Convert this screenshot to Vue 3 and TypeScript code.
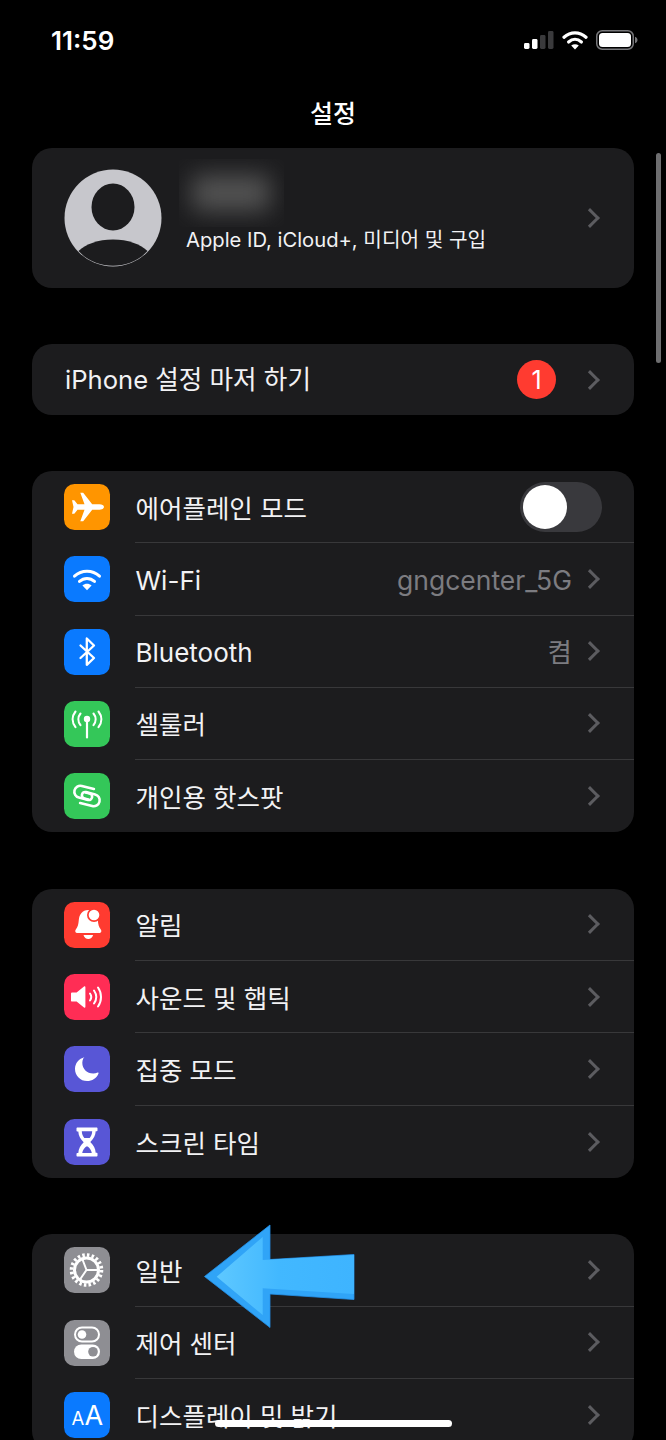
<script setup lang="ts">
interface Row { label: string; icon: string; bg: string; value?: string; toggle?: boolean }

const w = 'fill="#fff"'
const s = (width: number) => `fill="none" stroke="#fff" stroke-width="${width}" stroke-linecap="round" stroke-linejoin="round"`
const isLatin = (text: string) => /^[\x00-\x7f]+$/.test(text)

const icons: Record<string, string> = {
  plane: `<path ${w} d="M40 23c0-1.600-2.200-2.700-4.400-2.700h-7.400L19.600 9.200c-.3-.4-.6-.5-1-.5h-2.300l4.200 11.600h-7l-3-3.700c-.2-.3-.4-.4-.8-.4H8l1.500 6.800L8 29.800h1.700c.4 0 .6-.1.8-.4l3-3.700h7l-4.200 11.600h2.300c.4 0 .7-.1 1-.5l8.600-11.100h7.400c2.200 0 4.400-1.100 4.400-2.700z"/>`,
  wifi: `<path ${s(3)} d="M10.500 20.200c7.200-6.600 17.800-6.600 25 0"/><path ${s(3)} d="M15.500 25.400c4.400-4 10.600-4 15 0"/><path ${w} d="M23 34.200l-4.600-4.700c2.800-2.200 6.400-2.200 9.200 0z"/>`,
  bt: `<path ${s(2.3)} d="M16.500 16.500L30 29l-7.200 6.800V9.500L30 16.500 16.500 29"/>`,
  cell: `<circle cx="23" cy="18" r="3.200" fill="#fff"/><path ${s(2.2)} d="M23 19v17.500"/><path ${s(2.1)} d="M16.500 12.500c-2.800 3.400-2.800 8 0 11.600M29.500 12.500c2.800 3.400 2.800 8 0 11.600"/><path ${s(2.1)} d="M11.500 10.500c-3.800 4.800-3.800 10.800 0 15.600M34.500 10.500c3.800 4.800 3.800 10.800 0 15.600"/>`,
  link: `<g transform="rotate(14 23 23)"><path ${s(2.6)} d="M28 14.500H15.500a6 6 0 0 0 0 12H25a3.200 3.200 0 0 0 0-6.500h-4"/><path ${s(2.6)} d="M18 31.500h12.500a6 6 0 0 0 0-12H21a3.200 3.200 0 0 0 0 6.500h4"/></g>`,
  bell: `<path ${w} d="M24.300 8c-6 0-9 4.500-9.500 10-.4 4.600-1 7-3 9.500-1 1.200-.6 3.500 1 3.500h23c1.600 0 2-2.300 1-3.500-2-2.500-2.600-5-3-9.500-.5-5.500-3.500-10-9.500-10z"/><circle cx="30" cy="13" r="7" fill="#ff3b30"/><circle cx="30" cy="13" r="5.300" fill="#fff"/><path ${w} d="M19.500 33h9.600c-.8 2.800-2.500 4-4.800 4s-4-1.200-4.800-4z"/>`,
  sound: `<path ${w} d="M8 18.600h4.600L20 12.600c.8-.6 1.400-.2 1.400.7v19.400c0 .9-.6 1.300-1.400.7l-7.400-6h-4.600c-.7 0-1-.4-1-1v-7c0-.5.3-.8 1-.8z"/><path ${s(2)} d="M26 19.500c1.600 2.200 1.600 4.800 0 7"/><path ${s(2)} d="M30 16.500c2.800 4 2.800 9 0 13"/><path ${s(2)} d="M34 13.500c4 5.600 4 13.400 0 19"/>`,
  moon: `<path ${w} d="M20.600 11.200c-5.800 1.400-9.600 6-9.600 11.700 0 6.700 5.400 12.100 12.100 12.100 5 0 9.600-3 11.400-7.600.2-.6-.3-1-.8-.8-1.500.6-3 .9-4.500.9-6.300 0-10.900-4.700-10.900-10.800 0-1.500.4-3 1.100-4.500.3-.5-.2-1.100-.8-1z"/>`,
  hour: `<path ${w} d="M13.500 8.500h19c.6 0 1 .4 1 1v1.700c0 .6-.4 1-1 1h-.8c-.2 4.300-2.100 7.600-5.400 10.800 3.300 3.200 5.200 6.500 5.400 10.800h.8c.6 0 1 .4 1 1v1.700c0 .6-.4 1-1 1h-19c-.6 0-1-.4-1-1V35c0-.6.4-1 1-1h.8c.2-4.300 2.100-7.600 5.400-10.800-3.300-3.200-5.200-6.500-5.400-10.800h-.8c-.6 0-1-.4-1-1V9.500c0-.6.400-1 1-1z"/><path fill="#5856d6" d="M17.800 12.200h10.400c-.1 2.600-1 5-2.500 6.800h-5.400c-1.500-1.800-2.400-4.200-2.500-6.800zM22.200 27.500h1.600c1.800 1.700 3.500 3.400 4 6.500H18.200c.5-3.100 2.200-4.800 4-6.500z"/>`,
  gear: `<circle cx="22.500" cy="23" r="15" fill="none" stroke="#fff" stroke-width="3.600" stroke-dasharray="2.500 2.212"/><circle cx="22.500" cy="23" r="12" fill="none" stroke="#fff" stroke-width="3"/><path ${s(2)} d="M22.500 23L18.500 12.500M22.500 23H34M22.500 23l-6.500 9.500"/>`,
  ctrl: `<rect x="11" y="7.500" width="24" height="14" rx="7" fill="none" stroke="#fff" stroke-width="2"/><circle cx="18" cy="14.500" r="4.300" fill="#fff"/><rect x="10" y="24.500" width="26" height="14.500" rx="7.250" fill="#fff"/><circle cx="29" cy="31.750" r="4.800" fill="#8e8e93"/>`,
  aa: `<text x="7.500" y="33" font-family="Inter, sans-serif" font-size="18.500" fill="#fff">A</text><text x="20.500" y="33" font-family="Inter, sans-serif" font-size="27" fill="#fff">A</text>`,
}

const groups: Row[][] = [
  [
    { label: '에어플레인 모드', icon: 'plane', bg: '#ff9500', toggle: true },
    { label: 'Wi-Fi', icon: 'wifi', bg: '#0a7aff', value: 'gngcenter_5G' },
    { label: 'Bluetooth', icon: 'bt', bg: '#0a7aff', value: '켬' },
    { label: '셀룰러', icon: 'cell', bg: '#34c759' },
    { label: '개인용 핫스팟', icon: 'link', bg: '#34c759' },
  ],
  [
    { label: '알림', icon: 'bell', bg: '#ff3b30' },
    { label: '사운드 및 햅틱', icon: 'sound', bg: '#ff2d55' },
    { label: '집중 모드', icon: 'moon', bg: '#5856d6' },
    { label: '스크린 타임', icon: 'hour', bg: '#5856d6' },
  ],
  [
    { label: '일반', icon: 'gear', bg: '#8e8e93' },
    { label: '제어 센터', icon: 'ctrl', bg: '#8e8e93' },
    { label: '디스플레이 및 밝기', icon: 'aa', bg: '#0a7aff' },
  ],
]
</script>

<template>
  <div class="screen">
    <header class="status">
      <span class="time">11:59</span>
      <div class="status-icons">
        <svg width="30" height="18" viewBox="0 0 30 18">
          <rect x="0" y="12" width="5.500" height="6" rx="1.400" fill="#fff" />
          <rect x="8" y="8" width="5.500" height="10" rx="1.400" fill="#fff" />
          <rect x="16" y="4" width="5.500" height="14" rx="1.400" fill="#3a3a3c" />
          <rect x="24" y="0" width="5.500" height="18" rx="1.400" fill="#3a3a3c" />
        </svg>
        <svg width="26" height="20" viewBox="0 0 26 20">
          <path d="M2 7.200c6.500-5.800 15.500-5.800 22 0" fill="none" stroke="#fff" stroke-width="3.200" stroke-linecap="round" />
          <path d="M6.600 12c3.900-3.400 8.900-3.400 12.800 0" fill="none" stroke="#fff" stroke-width="3.200" stroke-linecap="round" />
          <path d="M13 19.500l-3.800-3.900c2.300-1.700 5.300-1.700 7.600 0z" fill="#fff" />
        </svg>
        <svg width="42" height="20" viewBox="0 0 42 20">
          <rect x="0.750" y="0.750" width="36.500" height="18.500" rx="5.500" fill="none" stroke="#77777a" stroke-width="1.500" />
          <rect x="3" y="3" width="32" height="14" rx="3.500" fill="#fff" />
          <path d="M39 6.800c1.500.4 2.500 1.700 2.500 3.200s-1 2.800-2.500 3.200z" fill="#77777a" />
        </svg>
      </div>
    </header>

    <h1 class="title">설정</h1>

    <section class="card profile">
      <svg class="avatar" width="98" height="98" viewBox="0 0 98 98">
        <circle cx="49" cy="49" r="48.500" fill="#c7c7cc" />
        <ellipse cx="49" cy="38" rx="21.500" ry="23.500" fill="#1c1c1e" />
        <path d="M14.500 82C22 75 34 70.500 49 70.500S76 75 83.500 82C75 91.500 62.500 96.800 49 96.800S23 91.500 14.500 82z" fill="#1c1c1e" />
      </svg>
      <div class="profile-text">
        <div class="blur-wrap"><div class="blur" /></div>
        <div class="sub">Apple ID, iCloud+, 미디어 및 구입</div>
      </div>
      <span class="chev" />
    </section>

    <section class="card single">
      <span class="label solo">iPhone 설정 마저 하기</span>
      <span class="badge">1</span>
      <span class="chev" />
    </section>

    <section v-for="(group, g) in groups" :key="g" class="card group">
      <div v-for="row in group" :key="row.label" class="row">
        <svg class="icon" :style="{ background: row.bg }" viewBox="0 0 46 46" width="46" height="46" v-html="icons[row.icon]" />
        <div class="row-main">
          <span class="label" :class="{ latin: isLatin(row.label) }">{{ row.label }}</span>
          <span v-if="row.value" class="value">{{ row.value }}</span>
          <span v-if="row.toggle" class="toggle"><span class="knob" /></span>
          <span v-else class="chev" />
        </div>
      </div>
    </section>

    <div class="scrollbar" />
    <svg class="arrow" width="152" height="106" viewBox="0 0 152 106">
      <defs>
        <linearGradient id="arrowFill" x1="0" y1="0" x2="1" y2="0">
          <stop offset="0" stop-color="#5ec8ff" />
          <stop offset="0.45" stop-color="#42b8ff" />
          <stop offset="1" stop-color="#3eb4ff" />
        </linearGradient>
      </defs>
      <path d="M.5 52.500L66 1V35.500L150 30.500V75.500L66 70V103.500z" fill="#30a4f7" stroke="#2390ea" stroke-width=".8" />
      <path d="M12.700 52.700L58.700 13V36L150 31V70L58.700 64.300V91z" fill="url(#arrowFill)" />
    </svg>
    <div class="home" />
  </div>
</template>

<style>
html, body { margin: 0; background: #000; }
</style>

<style scoped>
.screen {
  position: relative;
  width: 666px;
  height: 1440px;
  overflow: hidden;
  background: #000;
  color: #f2f2f4;
  font-family: Inter, "Noto Sans CJK KR", sans-serif;
  padding: 0 32px;
  box-sizing: border-box;
}
.status {
  display: flex;
  justify-content: space-between;
  align-items: center;
  height: 80px;
  margin: 0 -4px 0 19px;
}
.time { color: #fff; font-size: 26px; font-weight: 600; }
.status-icons { display: flex; align-items: center; gap: 8px; }
.title {
  margin: 0;
  height: 68px;
  line-height: 68px;
  text-align: center;
  font-size: 25px;
  font-weight: 500;
  color: #fff;
}
.card {
  background: #1c1c1e;
  border-radius: 20px;
  margin-bottom: 56px;
  overflow: hidden;
}
.profile {
  height: 140px;
  display: flex;
  align-items: center;
  padding: 0 34px 0 32px;
  box-sizing: border-box;
}
.avatar { flex: none; }
.profile-text { flex: 1; align-self: flex-start; margin-left: 24px; padding-top: 11px; }
.blur-wrap { height: 68px; margin-left: -7px; width: 105px; overflow: hidden; }
.blur {
  width: 78px;
  height: 36px;
  margin: 16px 0 0 13px;
  background: #545454;
  filter: blur(12px);
}
.sub { font-size: 20.200px; line-height: 26px; color: #f2f2f4; }
.single {
  height: 71px;
  display: flex;
  align-items: center;
  padding: 0 34px 0 32px;
}
.label.solo { flex: 1; padding: 0 0 0 1px; font-size: 25.600px; }
.badge {
  width: 39px;
  height: 39px;
  border-radius: 50%;
  background: #ff3b30;
  color: #fff;
  display: flex;
  align-items: center;
  justify-content: center;
  font-size: 25px;
  margin-right: 27px;
}
.group { margin-bottom: 56.500px; }
.row {
  height: 72.250px;
  display: flex;
  align-items: center;
}
.icon {
  flex: none;
  margin-left: 32px;
  border-radius: 10.500px;
}
.row-main {
  flex: 1;
  height: 100%;
  margin-left: 25px;
  padding-right: 34px;
  display: flex;
  align-items: center;
  box-sizing: border-box;
  border-bottom: 1px solid #38383a;
}
.row:last-child .row-main { border-bottom: 0; }
.label {
  font-size: 25.500px;
  line-height: 32px;
  padding: 4px 0 0 .5px;
  flex: 1;
  color: #f2f2f4;
  white-space: nowrap;
}
.label.latin { font-size: 26px; }
.value { font-size: 26.500px; line-height: 32px; padding-top: 2px; color: #7c7c81; margin-right: 11px; }
.chev {
  flex: none;
  width: 11px;
  height: 11px;
  margin-right: 3px;
  border-top: 3px solid #5c5c60;
  border-right: 3px solid #5c5c60;
  transform: rotate(45deg);
}
.toggle {
  position: relative;
  flex: none;
  width: 82px;
  height: 50px;
  margin-right: -2px;
  border-radius: 25px;
  background: #39393d;
}
.knob {
  position: absolute;
  left: 3px;
  top: 3px;
  width: 44px;
  height: 44px;
  border-radius: 50%;
  background: #fff;
}
.scrollbar {
  position: absolute;
  left: 656px;
  top: 153px;
  width: 5px;
  height: 210px;
  border-radius: 3px;
  background: #6e6e70;
}
.arrow { position: absolute; left: 204px; top: 1224px; }
.home {
  position: absolute;
  left: 215px;
  top: 1420px;
  width: 237px;
  height: 7px;
  border-radius: 4px;
  background: #fff;
}
</style>
